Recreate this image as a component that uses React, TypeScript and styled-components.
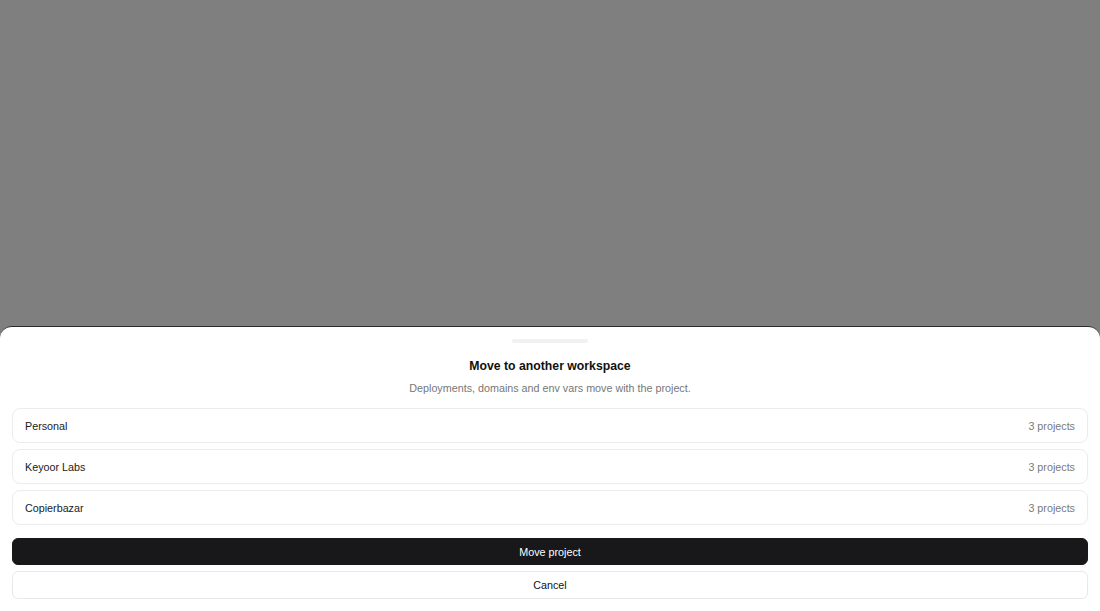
import React from "react";
import styled, { createGlobalStyle } from "styled-components";

const GlobalStyle = createGlobalStyle`
  html, body {
    margin: 0;
    padding: 0;
    height: 100%;
  }
  body {
    background: #ffffff;
    font-family: "Liberation Sans", Arial, sans-serif;
  }
  #root {
    height: 100%;
  }
`;

const Backdrop = styled.div`
  height: 611px;
  display: flex;
  flex-direction: column;
  justify-content: flex-end;
  background: rgba(0, 0, 0, 0.5);
`;

const Sheet = styled.div`
  background: #ffffff;
  border-top: 1px solid #2a2a2a;
  border-radius: 12px 12px 0 0;
  padding: 12px 12px 12px;
  display: flex;
  flex-direction: column;
  align-items: stretch;
`;

const Handle = styled.div`
  align-self: center;
  width: 76px;
  height: 4px;
  border-radius: 2px;
  background: #f1f1f1;
`;

const Title = styled.h2`
  margin: 14px 0 0;
  text-align: center;
  font-size: 12.25px;
  line-height: 18px;
  font-weight: 700;
  color: #111111;
`;

const Subtitle = styled.p`
  margin: 5px 0 0;
  text-align: center;
  font-size: 10.75px;
  line-height: 16px;
  color: #777777;
`;

const List = styled.div`
  margin-top: 12px;
  display: flex;
  flex-direction: column;
  gap: 6px;
`;

const Row = styled.div`
  height: 35px;
  box-sizing: border-box;
  border: 1px solid #ececec;
  border-radius: 8px;
  padding: 0 12px;
  display: flex;
  align-items: center;
  justify-content: space-between;
  font-size: 10.75px;
  color: #1a1a1a;
`;

const Count = styled.span`
  color: #7a7a7a;
`;

const Actions = styled.div`
  margin-top: 13px;
  display: flex;
  flex-direction: column;
  gap: 6px;
`;

const Button = styled.button<{ $primary?: boolean }>`
  height: ${(p) => (p.$primary ? "27px" : "28px")};
  box-sizing: border-box;
  border-radius: 6px;
  border: 1px solid ${(p) => (p.$primary ? "#18181a" : "#e8e8e8")};
  background: ${(p) => (p.$primary ? "#18181a" : "#ffffff")};
  color: ${(p) => (p.$primary ? "#ffffff" : "#111111")};
  font-family: "Liberation Sans", Arial, sans-serif;
  font-size: 10.75px;
  cursor: pointer;
  padding: 0;
`;

const workspaces = [
  { name: "Personal", projects: 3 },
  { name: "Keyoor Labs", projects: 3 },
  { name: "Copierbazar", projects: 3 },
];

export default function App() {
  return (
    <>
      <GlobalStyle />
      <Backdrop>
        <Sheet>
          <Handle />
          <Title>Move to another workspace</Title>
          <Subtitle>Deployments, domains and env vars move with the project.</Subtitle>
          <List>
            {workspaces.map((w) => (
              <Row key={w.name}>
                <span>{w.name}</span>
                <Count>{w.projects} projects</Count>
              </Row>
            ))}
          </List>
          <Actions>
            <Button $primary>Move project</Button>
            <Button>Cancel</Button>
          </Actions>
        </Sheet>
      </Backdrop>
    </>
  );
}
